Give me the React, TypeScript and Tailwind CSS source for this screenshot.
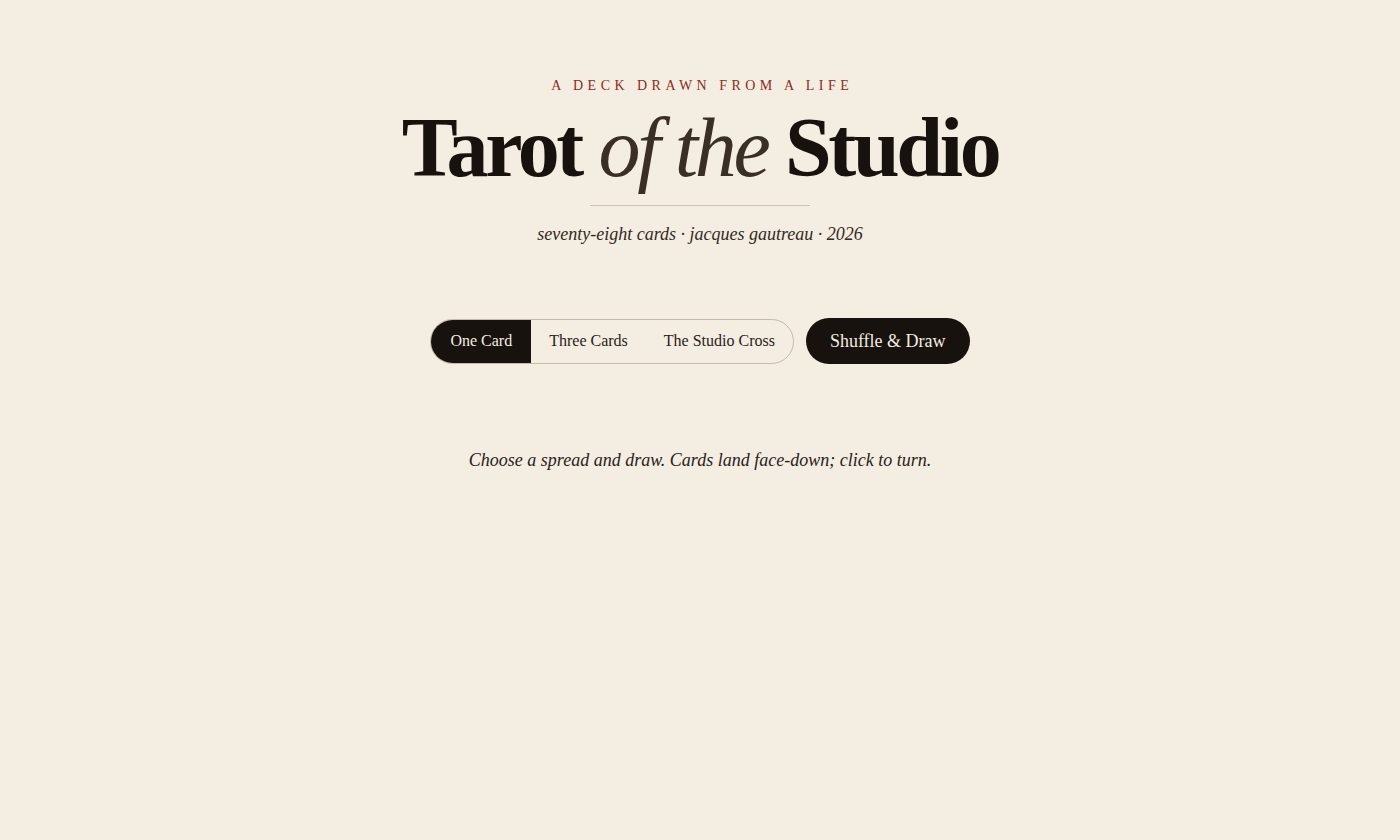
import { useState } from "react";

const spreads = ["One Card", "Three Cards", "The Studio Cross"];

export default function App() {
  const [spread, setSpread] = useState("One Card");

  return (
    <div className="min-h-[840px] w-full bg-[#f4ede1] text-[#17120e] font-['Liberation_Serif',serif]">
      <header className="flex flex-col items-center pt-[77px]">
        <div className="text-[14px] leading-[18px] tracking-[0.32em] text-[#8e2b20] pl-[0.32em]">
          A DECK DRAWN FROM A LIFE
        </div>
        <h1 className="mt-[5px] text-[84px] leading-[96px] tracking-[-0.04em] whitespace-nowrap font-bold">
          Tarot <em className="text-[#3a2f24] font-normal">of the</em> Studio
        </h1>
        <div className="mt-[9px] h-px w-[220px] bg-[#cbc0b0]" />
        <p className="mt-[17px] text-[18px] leading-[22px] italic text-[#332a22]">
          seventy-eight cards · jacques gautreau · 2026
        </p>
      </header>

      {/* spread picker + draw */}
      <div className="mt-[73px] flex items-center justify-center gap-3">
        <div className="flex h-[45px] items-stretch overflow-hidden rounded-full border border-[#c6baa9]">
          {spreads.map((s) =>
            s === spread ? (
              <button
                key={s}
                onClick={() => setSpread(s)}
                className="bg-[#17120e] px-[19px] text-[16px] text-[#f4ede1]"
              >
                {s}
              </button>
            ) : (
              <button
                key={s}
                onClick={() => setSpread(s)}
                className="px-[18px] text-[16px] text-[#2a221b]"
              >
                {s}
              </button>
            )
          )}
        </div>
        <button className="h-[46px] rounded-full bg-[#17120e] px-[24px] text-[18px] text-[#f4ede1]">
          Shuffle &amp; Draw
        </button>
      </div>

      <p className="mt-[83px] text-center text-[18px] italic text-[#2a221b]">
        Choose a spread and draw. Cards land face-down; click to turn.
      </p>
    </div>
  );
}
